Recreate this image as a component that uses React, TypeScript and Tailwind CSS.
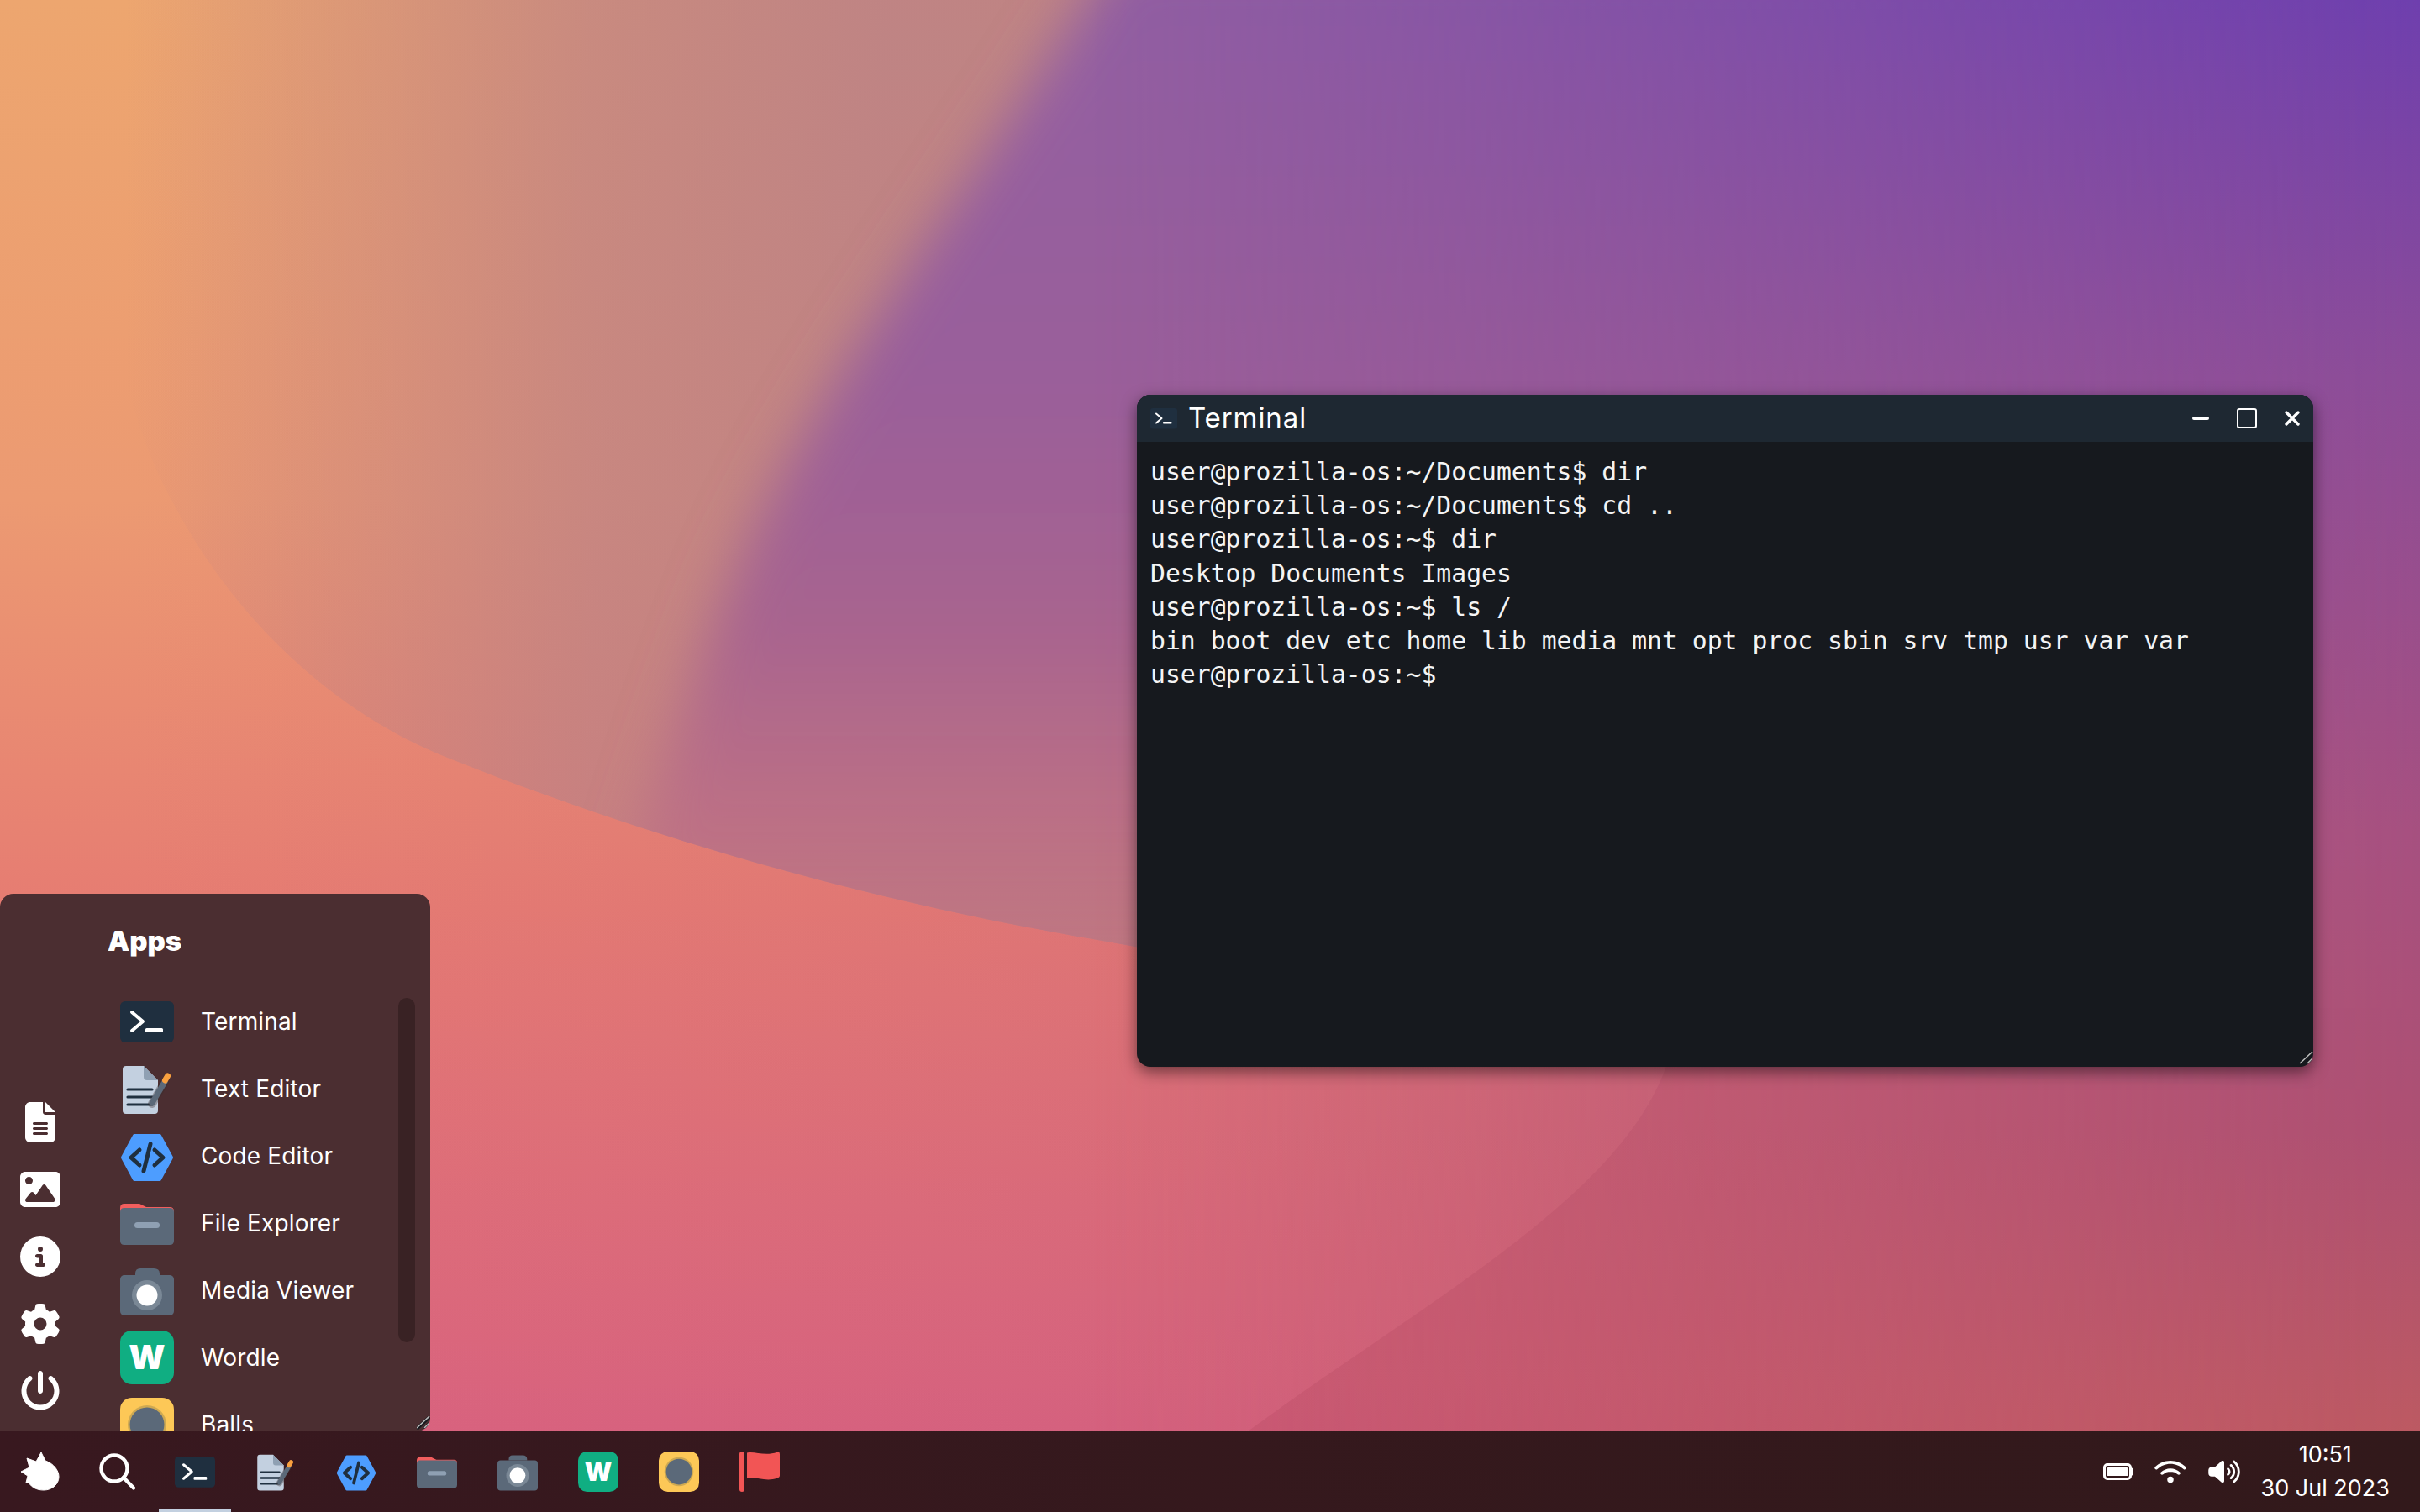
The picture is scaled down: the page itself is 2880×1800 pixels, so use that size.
import { FaCircleInfo, FaFileLines, FaGear, FaImage, FaPowerOff, FaVolumeHigh, FaWifi } from "react-icons/fa6";

type IconProps = { className?: string };

function TerminalIcon({ className }: IconProps) {
  return (
    <svg viewBox="0 0 64 64" className={className}>
      <rect x="0" y="8" width="64" height="49" rx="6" fill="#1f2f3f" />
      <path d="M14 21 L27 32 L14 43" fill="none" stroke="#fff" strokeWidth="4" strokeLinecap="round" strokeLinejoin="round" />
      <rect x="30" y="40" width="21" height="5" rx="1.5" fill="#fff" />
    </svg>
  );
}

function TextEditorIcon({ className }: IconProps) {
  return (
    <svg viewBox="0 0 64 64" className={className}>
      <path d="M7 5 H28 L45 22 V58 Q45 62 41 62 H7 Q3 62 3 58 V9 Q3 5 7 5 Z" fill="#c3d0e0" />
      <path d="M28 5 V18 Q28 22 32 22 H45 Z" fill="#8fa0b3" />
      <path d="M9 33 H38 M9 42 H38 M9 51 H38" stroke="#1f2f3f" strokeWidth="3.2" strokeLinecap="round" />
      <path d="M38 50 L53 24" stroke="#3a2a2c" strokeOpacity="0.35" strokeWidth="10" strokeLinecap="round" />
      <path d="M38 49 L53 24" stroke="#5b6979" strokeWidth="7" strokeLinecap="round" />
      <path d="M53.5 22 L56.5 17" stroke="#f9a03f" strokeWidth="7" strokeLinecap="round" />
    </svg>
  );
}

function CodeEditorIcon({ className }: IconProps) {
  return (
    <svg viewBox="0 0 64 64" className={className}>
      <path d="M17 8 H47 L61 34 L47 60 H17 L3 34 Z" fill="#4d9dff" stroke="#4d9dff" strokeWidth="4" strokeLinejoin="round" />
      <path d="M23 25 L13 34 L23 43 M41 25 L51 34 L41 43 M36 18 L28 50" fill="none" stroke="#1f2f3f" strokeWidth="5" strokeLinecap="round" strokeLinejoin="round" />
    </svg>
  );
}

function FolderIcon({ className }: IconProps) {
  return (
    <svg viewBox="0 0 64 64" className={className}>
      <path d="M0 14 Q0 9 5 9 H23 L31 13 H59 Q64 13 64 18 V30 H0 Z" fill="#f25e5e" />
      <path d="M0 19 Q0 14 5 14 H59 Q64 14 64 19 V53 Q64 58 59 58 H5 Q0 58 0 53 Z" fill="#5b6979" />
      <rect x="17" y="31" width="30" height="7" rx="3.5" fill="#8fa0b3" />
    </svg>
  );
}

function CameraIcon({ className }: IconProps) {
  return (
    <svg viewBox="0 0 64 64" className={className}>
      <path d="M18 14 V12 Q18 6 24 6 H40 Q47 6 47 12 V14 Z" fill="#5b6979" />
      <rect x="0" y="14" width="64" height="48" rx="5" fill="#5b6979" />
      <circle cx="32" cy="38" r="18" fill="#7a8896" />
      <circle cx="32" cy="38" r="12.5" fill="#fff" />
    </svg>
  );
}

function WordleIcon({ className }: IconProps) {
  return (
    <svg viewBox="0 0 64 64" className={className}>
      <rect x="0" y="0" width="64" height="64" rx="14" fill="#10ae82" />
      <text x="32" y="46" textAnchor="middle" fontFamily="Inter, sans-serif" fontWeight="900" fontSize="40" fill="#fff">
        W
      </text>
    </svg>
  );
}

function BallsIcon({ className }: IconProps) {
  return (
    <svg viewBox="0 0 64 64" className={className}>
      <rect x="0" y="0" width="64" height="64" rx="14" fill="#fdc857" />
      <circle cx="32" cy="32" r="23" fill="#a88f4f" fillOpacity="0.55" />
      <circle cx="32" cy="32" r="20.5" fill="#5b6979" />
    </svg>
  );
}

function FlagIcon({ className }: IconProps) {
  return (
    <svg viewBox="0 0 64 64" className={className}>
      <rect x="0" y="0" width="8" height="64" rx="4" fill="#f25555" />
      <path d="M12 2 C24 -1 40 8 60 1 Q64 0 64 4 V38 Q64 41 60 42 C42 49 26 39 12 42 Z" fill="#f25555" />
    </svg>
  );
}

function LogoIcon({ className }: IconProps) {
  return (
    <svg viewBox="0 0 48 48" fill="#fff" className={className}>
      <path d="M25 1 L30 11 C39 14 46 22 46 30 C46 39 38 46 28 46 C20 46 14 43 10 37 L7 37 L9 29 L1 24 L11 19 L8 8 L19 12 Z" stroke="#fff" strokeWidth="1" strokeLinejoin="round" />
    </svg>
  );
}

function SearchIcon({ className }: IconProps) {
  return (
    <svg viewBox="0 0 48 48" fill="none" stroke="#fff" strokeWidth="4.4" strokeLinecap="round" className={className}>
      <circle cx="20" cy="20" r="15.5" />
      <path d="M31 31 L43 43.5" />
    </svg>
  );
}

function BatteryIcon({ className }: IconProps) {
  return (
    <svg viewBox="0 0 36 20" fill="none" className={className}>
      <rect x="1.5" y="1.5" width="31" height="17" rx="3.5" stroke="#fff" strokeWidth="3" />
      <rect x="5" y="5" width="24" height="10" rx="0.5" fill="#fff" />
      <path d="M34 7 V13" stroke="#fff" strokeWidth="3" strokeLinecap="round" />
    </svg>
  );
}

// the little resize grip in the corner of windows
function ResizeGrip() {
  return (
    <svg viewBox="0 0 16 16" className="absolute bottom-[2px] right-0 h-[16px] w-[16px]">
      <path d="M0 15 L15 1 M9 15 L15 9" stroke="#16191e" strokeWidth="4" />
      <path d="M0 14 L15 0 M9 14 L15 8" stroke="#b9b9b9" strokeWidth="1.6" />
    </svg>
  );
}

const APPS = [
  { name: "Terminal", Icon: TerminalIcon },
  { name: "Text Editor", Icon: TextEditorIcon },
  { name: "Code Editor", Icon: CodeEditorIcon },
  { name: "File Explorer", Icon: FolderIcon },
  { name: "Media Viewer", Icon: CameraIcon },
  { name: "Wordle", Icon: WordleIcon },
  { name: "Balls", Icon: BallsIcon },
];

const TASKBAR_APPS = [TerminalIcon, TextEditorIcon, CodeEditorIcon, FolderIcon, CameraIcon, WordleIcon, BallsIcon, FlagIcon];

const SIDE_ICONS = [FaFileLines, FaImage, FaCircleInfo, FaGear, FaPowerOff];

const TERMINAL_LINES = [
  "user@prozilla-os:~/Documents$ dir",
  "user@prozilla-os:~/Documents$ cd ..",
  "user@prozilla-os:~$ dir",
  "Desktop Documents Images",
  "user@prozilla-os:~$ ls /",
  "bin boot dev etc home lib media mnt opt proc sbin srv tmp usr var var",
  "user@prozilla-os:~$",
];

function Wallpaper() {
  return (
    <svg viewBox="0 0 2880 1800" preserveAspectRatio="none" className="absolute inset-0 h-full w-full">
      <defs>
        <linearGradient id="left" x1="0" y1="0" x2="0" y2="1800" gradientUnits="userSpaceOnUse">
          <stop offset="0" stopColor="#eda66f" />
          <stop offset="0.33" stopColor="#ec9a72" />
          <stop offset="0.6" stopColor="#e67c72" />
          <stop offset="1" stopColor="#d85f80" />
        </linearGradient>
        <linearGradient id="tint" x1="150" y1="0" x2="1300" y2="0" gradientUnits="userSpaceOnUse">
          <stop offset="0" stopColor="#c05a80" stopOpacity="0" />
          <stop offset="1" stopColor="#c05a80" stopOpacity="0.2" />
        </linearGradient>
        <linearGradient id="right" x1="0" y1="0" x2="0" y2="1800" gradientUnits="userSpaceOnUse">
          <stop offset="0" stopColor="#6e3fae" />
          <stop offset="0.25" stopColor="#8c4c98" />
          <stop offset="0.55" stopColor="#a65080" />
          <stop offset="0.75" stopColor="#ad5072" />
          <stop offset="1" stopColor="#c05c5e" />
        </linearGradient>
        <linearGradient id="fade" x1="1300" y1="0" x2="2880" y2="0" gradientUnits="userSpaceOnUse">
          <stop offset="0" stopColor="#fff" stopOpacity="0" />
          <stop offset="1" stopColor="#fff" stopOpacity="1" />
        </linearGradient>
        <mask id="fadeMask" maskUnits="userSpaceOnUse" x="0" y="0" width="2880" height="1800">
          <rect width="2880" height="1800" fill="url(#fade)" />
        </mask>
        <linearGradient id="wedge" x1="150" y1="0" x2="1050" y2="0" gradientUnits="userSpaceOnUse">
          <stop offset="0" stopColor="#ba8186" stopOpacity="0" />
          <stop offset="0.33" stopColor="#ba8186" stopOpacity="0.36" />
          <stop offset="0.61" stopColor="#ba8186" stopOpacity="0.68" />
          <stop offset="1" stopColor="#ba8186" stopOpacity="0.88" />
        </linearGradient>
        <linearGradient id="purple" x1="0" y1="0" x2="0" y2="1150" gradientUnits="userSpaceOnUse">
          <stop offset="0" stopColor="#925fa2" />
          <stop offset="0.4" stopColor="#9a5f9a" />
          <stop offset="0.65" stopColor="#a8648f" />
          <stop offset="0.85" stopColor="#bb6c86" stopOpacity="0.8" />
          <stop offset="1" stopColor="#c07080" stopOpacity="0.5" />
        </linearGradient>
        <filter id="soft" x="-10%" y="-10%" width="120%" height="120%">
          <feGaussianBlur stdDeviation="32" />
        </filter>
        <clipPath id="aboveCurve">
          <path d="M0 -100 H2900 V1300 L1993 1270 C1700 1190 1480 1150 1295 1117 C1071 1079 803 1010 535 903 C400 850 280 740 205 597 L0 400 Z" />
        </clipPath>
      </defs>
      <rect width="2880" height="1800" fill="url(#left)" />
      <rect width="2880" height="1800" fill="url(#tint)" />
      <path
        d="M0 0 H1993 V1270 C1700 1190 1480 1150 1295 1117 C1071 1079 803 1010 535 903 C400 850 280 740 205 597 C140 480 110 300 100 0 Z"
        fill="url(#wedge)"
      />
      <g clipPath="url(#aboveCurve)">
        <path
          d="M1330 -60 C1170 210 950 480 857 727 C810 850 760 1000 700 1200 L2900 1400 V-60 Z"
          fill="url(#purple)"
          filter="url(#soft)"
        />
      </g>
      <path d="M1995 1200 C1995 1400 1700 1540 1450 1730 V1800 H2880 V1200 Z" fill="#a83a58" fillOpacity="0.22" />
      <rect width="2880" height="1800" fill="url(#right)" mask="url(#fadeMask)" />
    </svg>
  );
}

function StartMenu() {
  return (
    <div className="absolute bottom-0 left-0 flex h-[640px] w-[512px] overflow-hidden rounded-t-2xl rounded-br-2xl bg-[#4b2e31] text-white">
      <div className="flex w-[96px] flex-col items-center justify-end pb-[8px]">
        {SIDE_ICONS.map((Icon, i) => (
          <div key={i} className="flex h-[80px] w-[96px] items-center justify-center">
            <Icon className="h-[48px] w-[48px]" />
          </div>
        ))}
      </div>
      <div className="flex flex-1 flex-col pl-[32px]">
        <div className="flex h-[112px] shrink-0 items-center pt-[2px] text-[33px] font-black">Apps</div>
        {APPS.map(({ name, Icon }) => (
          <div key={name} className="flex h-[80px] shrink-0 items-center gap-[32px] pl-[15px]">
            <Icon className="h-[64px] w-[64px] shrink-0" />
            <span className="text-[28px] tracking-[0.15px]">{name}</span>
          </div>
        ))}
      </div>
      <div className="absolute right-[18px] top-[124px] h-[410px] w-[20px] rounded-[10px] bg-[#392224]" />
      <ResizeGrip />
    </div>
  );
}

function TerminalWindow() {
  return (
    <div className="absolute left-[1353px] top-[470px] flex h-[800px] w-[1400px] flex-col overflow-hidden rounded-2xl bg-[#16191e] shadow-[0_6px_18px_rgba(0,0,0,0.5)]">
      <div className="flex h-[56px] shrink-0 items-center bg-[#1e2832] pl-[16px] text-white">
        <TerminalIcon className="h-[32px] w-[32px]" />
        <span className="ml-[13px] text-[33px] tracking-[0.9px]">Terminal</span>
        <div className="ml-auto flex items-center">
          <svg viewBox="0 0 20 4" className="mr-[33px] h-[4px] w-[20px]">
            <rect width="20" height="4" rx="2" fill="#fff" />
          </svg>
          <svg viewBox="0 0 24 24" fill="none" className="mr-[33px] h-[24px] w-[24px]">
            <rect x="1" y="1" width="22" height="22" rx="2" stroke="#fff" strokeWidth="2" />
          </svg>
          <svg viewBox="0 0 18 18" className="mr-[16px] h-[18px] w-[18px]" stroke="#fff" strokeWidth="3.4" strokeLinecap="round">
            <path d="M2 2 L16 16 M16 2 L2 16" />
          </svg>
        </div>
      </div>
      <div className="px-[16px] pt-[16px] font-['DejaVu_Sans_Mono',monospace] text-[29.76px] leading-[40.2px] text-[#f4f4f4]">
        {TERMINAL_LINES.map((line) => (
          <div key={line} className="whitespace-pre">
            {line}
          </div>
        ))}
      </div>
      <ResizeGrip />
    </div>
  );
}

function Taskbar() {
  return (
    <div className="flex h-[96px] shrink-0 items-center bg-[linear-gradient(90deg,#38181f,#32191b)] text-white">
      <div className="flex h-[96px] w-[96px] items-center justify-center">
        <LogoIcon className="h-[48px] w-[48px]" />
      </div>
      <div className="flex h-[96px] w-[88px] items-center justify-center">
        <SearchIcon className="h-[48px] w-[48px]" />
      </div>
      {TASKBAR_APPS.map((Icon, i) => (
        <div key={i} className="relative flex h-[96px] w-[96px] items-center justify-center">
          <Icon className="h-[48px] w-[48px]" />
          {i === 0 && <div className="absolute bottom-0 left-[5px] h-[4px] w-[86px] bg-[#c3d0e0]" />}
        </div>
      ))}
      <div className="ml-auto flex items-center pr-[36px]">
        <BatteryIcon className="mr-[24px] h-[20px] w-[36px]" />
        <FaWifi className="mr-[24px] h-[30px] w-[40px]" />
        <FaVolumeHigh className="mr-[24px] h-[30px] w-[40px]" />
        <div className="flex flex-col items-center text-[27px] leading-[40px]">
          <span>10:51</span>
          <span>30 Jul 2023</span>
        </div>
      </div>
    </div>
  );
}

export default function App() {
  return (
    <div className="relative flex h-screen w-screen flex-col overflow-hidden font-['Inter',sans-serif]">
      <Wallpaper />
      <div className="relative flex-1">
        <TerminalWindow />
        <StartMenu />
      </div>
      <div className="relative">
        <Taskbar />
      </div>
    </div>
  );
}
